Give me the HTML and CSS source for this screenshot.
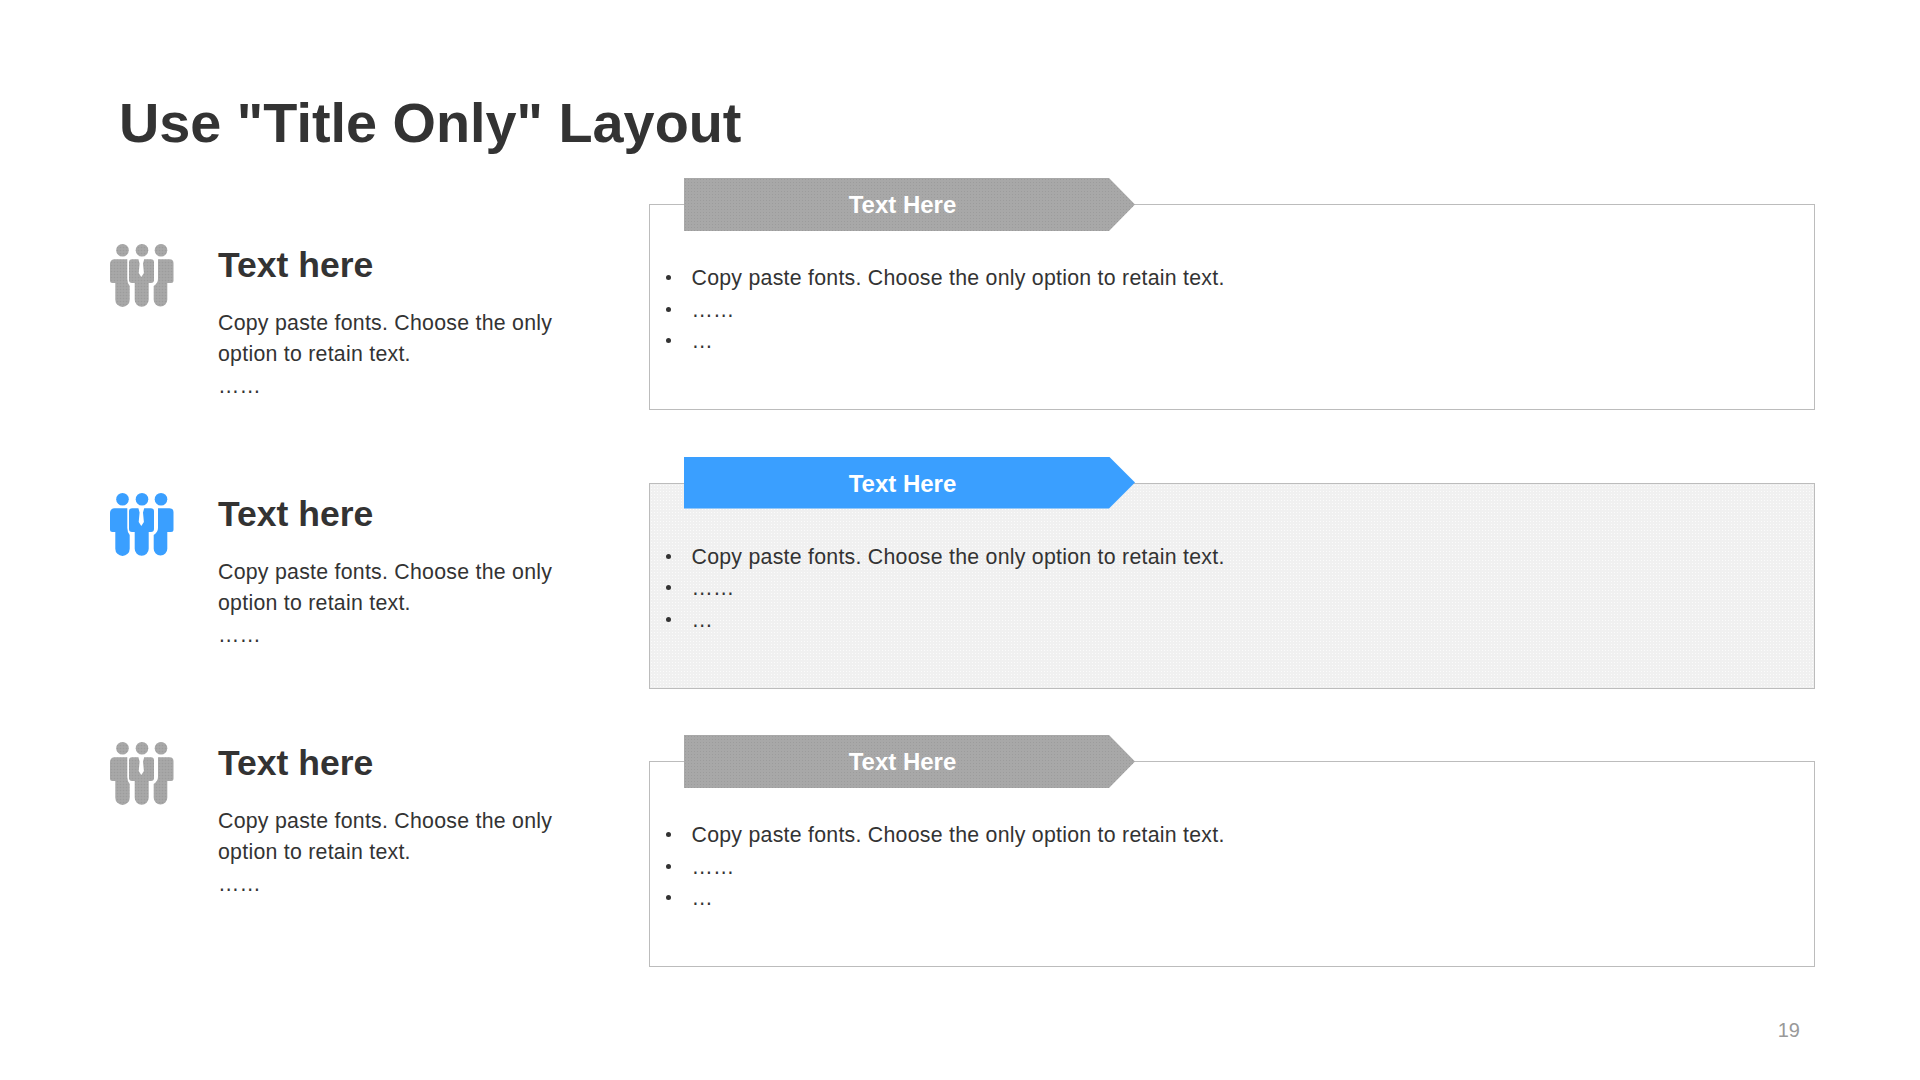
FILE: index.html
```html
<!DOCTYPE html>
<html lang="en">
<head>
<meta charset="utf-8">
<title>Use "Title Only" Layout</title>
<link rel="stylesheet" href="styles.css">
</head>
<body>
<svg class="defs" width="0" height="0" aria-hidden="true">
  <defs>
    <pattern id="dither" width="3" height="3" patternUnits="userSpaceOnUse">
      <rect width="3" height="3" fill="#a8a8a8"/>
      <circle cx="1.5" cy="1.5" r="0.8" fill="#9c9c9c"/>
    </pattern>
  </defs>
  <symbol id="people" viewBox="0 0 64 64">
    <circle cx="12.5" cy="7.3" r="6.3"/>
    <circle cx="32" cy="7.3" r="6.3"/>
    <circle cx="51" cy="7.3" r="6.3"/>
    <path d="M4.5 16.3H17.3V36Q17.3 40 19.7 43V56.7A7.2 7.2 0 0 1 5.3 56.7V40H2.5A2.5 2.5 0 0 1 0 37.5V20.8A4.5 4.5 0 0 1 4.5 16.3Z"/>
    <path d="M48 16.3H59.5A4 4 0 0 1 63.5 20.3V37.5A2.5 2.5 0 0 1 61 40H57.3V56.7A6.8 6.8 0 0 1 43.7 56.7V43Q48 40 48 36Z"/>
    <path fill-rule="evenodd" d="M22 16.3H41A3 3 0 0 1 44 19.3V37A3 3 0 0 1 41 40H38.7V56.7A7 7 0 0 1 24.7 56.7V40H22A3 3 0 0 1 19 37V19.3A3 3 0 0 1 22 16.3ZM28.4 16.3 29.6 20.5 28.7 30 31.3 34 33.9 30 33 20.5 34.2 16.3Z"/>
  </symbol>
</svg>
<main class="slide">
  <h1 class="title">Use "Title Only" Layout</h1>
  <div class="content">
    <section class="topics">
      <article class="topic">
        <svg class="icon"><use href="#people"/></svg>
        <div class="topic-text">
          <h2>Text here</h2>
          <p>Copy paste fonts. Choose the only<br>option to retain text.</p>
          <p class="more">……</p>
        </div>
      </article>
      <article class="topic active">
        <svg class="icon"><use href="#people"/></svg>
        <div class="topic-text">
          <h2>Text here</h2>
          <p>Copy paste fonts. Choose the only<br>option to retain text.</p>
          <p class="more">……</p>
        </div>
      </article>
      <article class="topic">
        <svg class="icon"><use href="#people"/></svg>
        <div class="topic-text">
          <h2>Text here</h2>
          <p>Copy paste fonts. Choose the only<br>option to retain text.</p>
          <p class="more">……</p>
        </div>
      </article>
    </section>
    <section class="panels">
      <article class="panel">
        <div class="tag">Text Here</div>
        <ul class="box">
          <li>Copy paste fonts. Choose the only option to retain text.</li>
          <li>……</li>
          <li>…</li>
        </ul>
      </article>
      <article class="panel active">
        <div class="tag">Text Here</div>
        <ul class="box">
          <li>Copy paste fonts. Choose the only option to retain text.</li>
          <li>……</li>
          <li>…</li>
        </ul>
      </article>
      <article class="panel">
        <div class="tag">Text Here</div>
        <ul class="box">
          <li>Copy paste fonts. Choose the only option to retain text.</li>
          <li>……</li>
          <li>…</li>
        </ul>
      </article>
    </section>
  </div>
  <footer class="page">19</footer>
</main>
</body>
</html>
```
FILE: styles.css
```css
* { box-sizing: border-box; margin: 0; padding: 0; }
html, body { width: 1920px; height: 1080px; overflow: hidden; background: #fff; }
body { font-family: "Liberation Sans", Arial, sans-serif; color: #333; }
.defs { display: block; height: 0; }
.slide { width: 1920px; height: 1080px; padding: 92px 105px 0 110px; display: flex; flex-direction: column; }
.title { font-size: 55.8px; line-height: 61px; font-weight: 700; color: #333; margin-left: 9px; }
.content { display: flex; margin-top: 25px; }
.topics { width: 538.5px; flex: none; display: flex; flex-direction: column; gap: 54px; padding-top: 65px; }
.topic { display: flex; gap: 44px; height: 195px; }
.icon { width: 64px; height: 64px; flex: none; fill: url(#dither); }
.topic.active .icon { fill: #3a9fff; }
.topic h2 { font-size: 35.5px; line-height: 40px; font-weight: 700; color: #333; margin-top: 2px; }
.topic p { font-size: 21.3px; letter-spacing: 0.26px; line-height: 31px; margin-top: 23px; color: #333; }
.topic p.more { margin-top: 1px; }
.panels { flex: 1; display: flex; flex-direction: column; gap: 46.5px; }
.panel { display: flex; flex-direction: column; }
.tag {
  position: relative; z-index: 1;
  width: 451px; height: 53px; margin-left: 35.5px; margin-bottom: -27px; padding-right: 14px;
  display: flex; align-items: center; justify-content: center;
  font-size: 24px; font-weight: 700; color: #fff;
  background-color: #a8a8a8;
  background-image: radial-gradient(circle, #9c9c9c 0.6px, transparent 0.9px);
  background-size: 3px 3px;
  clip-path: polygon(0 0, 425px 0, 100% 50%, 425px 100%, 0 100%);
}
.panel.active .tag { background: #3a9fff; height: 52px; margin-bottom: -26px; padding-top: 2px; }
.box { height: 206px; border: 1.5px solid #bcbcbc; list-style: none; padding: 58px 0 0 16px; font-size: 21.3px; letter-spacing: 0.26px; line-height: 31.7px; }
.panel.active .box {
  background-color: #f0f0f0;
  background-image: radial-gradient(circle, #fbfbfb 0.7px, transparent 1px);
  background-size: 3px 3px;
}
.box li { display: flex; align-items: flex-start; gap: 21px; color: #333; }
.box li::before { content: ""; flex: none; width: 5px; height: 5px; border-radius: 50%; background: #333; margin-top: 12px; }
.page { margin-top: auto; padding: 0 15px 38px 0; text-align: right; font-size: 20px; line-height: 24px; color: #999; }
```
